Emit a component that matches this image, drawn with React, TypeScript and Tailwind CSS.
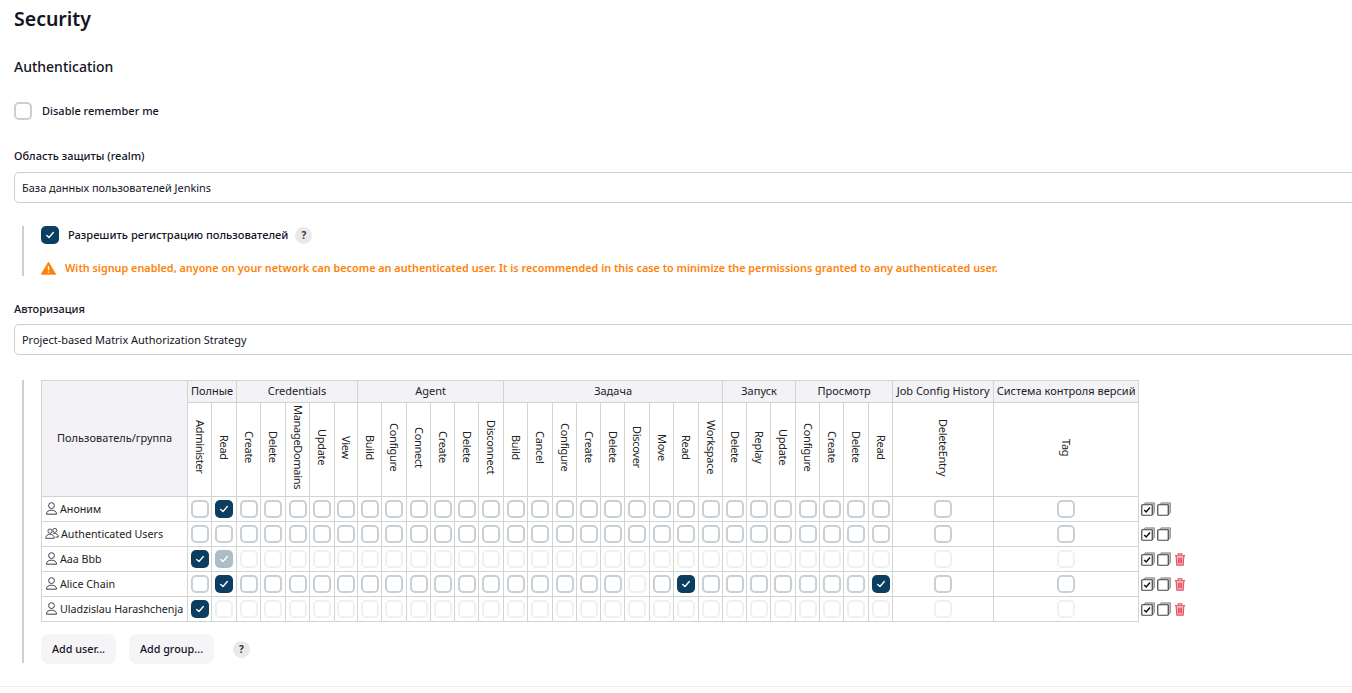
type Group = { title: string; perms: { name: string; width: number }[] };

const groups: Group[] = [
  { title: "Полные", perms: [{ name: "Administer", width: 24 }, { name: "Read", width: 25 }] },
  {
    title: "Credentials",
    perms: [
      { name: "Create", width: 24 },
      { name: "Delete", width: 25 },
      { name: "ManageDomains", width: 24 },
      { name: "Update", width: 25 },
      { name: "View", width: 23 },
    ],
  },
  {
    title: "Agent",
    perms: [
      { name: "Build", width: 24 },
      { name: "Configure", width: 25 },
      { name: "Connect", width: 24 },
      { name: "Create", width: 24 },
      { name: "Delete", width: 24 },
      { name: "Disconnect", width: 25 },
    ],
  },
  {
    title: "Задача",
    perms: [
      { name: "Build", width: 24 },
      { name: "Cancel", width: 25 },
      { name: "Configure", width: 24 },
      { name: "Create", width: 24 },
      { name: "Delete", width: 24 },
      { name: "Discover", width: 25 },
      { name: "Move", width: 24 },
      { name: "Read", width: 25 },
      { name: "Workspace", width: 24 },
    ],
  },
  {
    title: "Запуск",
    perms: [
      { name: "Delete", width: 24 },
      { name: "Replay", width: 24 },
      { name: "Update", width: 25 },
    ],
  },
  {
    title: "Просмотр",
    perms: [
      { name: "Configure", width: 24 },
      { name: "Create", width: 24 },
      { name: "Delete", width: 25 },
      { name: "Read", width: 24 },
    ],
  },
  { title: "Job Config History", perms: [{ name: "DeleteEntry", width: 101 }] },
  { title: "Система контроля версий", perms: [{ name: "Tag", width: 145 }] },
];

const perms = groups.flatMap((g) => g.perms);
const total = perms.length;

// c = checked, g = checked+disabled, d = disabled, anything else is an empty box
type Row = { name: string; group?: boolean; states: Record<number, string>; rest: string; trash?: boolean };

const rows: Row[] = [
  { name: "Аноним", states: { 1: "c" }, rest: "e" },
  { name: "Authenticated Users", group: true, states: {}, rest: "e" },
  { name: "Aaa Bbb", states: { 0: "c", 1: "g" }, rest: "d", trash: true },
  { name: "Alice Chain", states: { 1: "c", 18: "d", 20: "c", 28: "c" }, rest: "e", trash: true },
  { name: "Uladzislau Harashchenja", states: { 0: "c" }, rest: "d", trash: true },
];

const Check = ({ state }: { state: string }) => {
  const box = "w-[18px] h-[18px] rounded-[5px]";
  if (state === "c" || state === "g") {
    return (
      <span
        className={`${box} inline-flex items-center justify-center align-middle ${
          state === "c" ? "bg-[#0b3e60]" : "bg-[#adbdc8]"
        }`}
      >
        <svg viewBox="0 0 12 12" className="w-[10px] h-[10px]" fill="none" stroke="white" strokeWidth="1.6" strokeLinecap="round" strokeLinejoin="round">
          <path d="M2 6.5 4.8 9 10 3" />
        </svg>
      </span>
    );
  }
  return (
    <span
      className={`${box} inline-block align-middle border-2 bg-white ${
        state === "d" ? "border-[#eef0f2]" : "border-[#c8d0d6]"
      }`}
    />
  );
};

const HelpDot = () => (
  <span className="inline-flex w-[17px] h-[17px] rounded-full bg-[#e9e9ea] items-center justify-center text-[10px] font-bold text-[#333]">
    ?
  </span>
);

const UserIcon = () => (
  <svg viewBox="0 0 13 13" className="w-[13px] h-[13px] shrink-0" fill="none" stroke="#3c3c44" strokeWidth="1">
    <circle cx="6.5" cy="3.6" r="2.9" />
    <path d="M1.5 12.2c0-2.8 2-4 5-4s5 1.2 5 4Z" strokeLinejoin="round" />
  </svg>
);

const GroupIcon = () => (
  <svg viewBox="0 0 14 12" className="w-[14px] h-[13px] shrink-0" fill="none" stroke="#3c3c44" strokeWidth="0.9">
    <circle cx="5" cy="3.6" r="2.1" />
    <circle cx="9.8" cy="2.9" r="2" />
    <path d="M.8 10.8c0-2.6 1.6-4 4.2-4s4.2 1.4 4.2 4Z" strokeLinejoin="round" />
    <path d="M8.4 6c2.9-.5 5 .9 5 3.6h-3" strokeLinejoin="round" />
  </svg>
);

const SelectAllIcon = ({ checked }: { checked: boolean }) => (
  <svg viewBox="0 0 14 14" className="w-[14px] h-[14px] shrink-0" fill="none">
    <path d="M2 3 4 .8h9.5v9.7L11.5 13Z" stroke="#8a8a8a" strokeWidth="0.8" fill="#bdbdbd" />
    <rect x="0.75" y="2.75" width="10.5" height="10.5" rx="0.8" fill="white" stroke="#444" strokeWidth="1.2" />
    {checked && <path d="M3.2 8 5.2 10 9 5.4" stroke="#111" strokeWidth="1.5" />}
  </svg>
);

const TrashIcon = () => (
  <svg viewBox="0 0 12 14" className="w-[12px] h-[13px] shrink-0" fill="none" stroke="#e8505f" strokeWidth="1.2">
    <path d="M0.5 2.8h11" />
    <path d="M4 2.6V1h4v1.6" />
    <path d="M1.8 3 2.6 13h6.8l.8-10" fill="#f7b5be" />
    <path d="M4.5 5v6M6 5v6M7.5 5v6" />
  </svg>
);

const App = () => {
  return (
    <div className="w-[1352px] h-[693px] overflow-hidden bg-white text-[#14141f] font-['Noto_Sans','Open_Sans',sans-serif]">
      <div className="pl-[14px]">
        <h1 className="pt-[6px] text-[19.5px] leading-[26px] font-semibold">Security</h1>
        <h2 className="mt-[25px] text-[14px] leading-[20px] font-medium">Authentication</h2>

        <label className="mt-[25px] flex items-center gap-[10px] text-[11px] leading-[18px] font-medium">
          <Check state="e" />
          Disable remember me
        </label>

        <div className="mt-[28px] text-[11px] leading-[16px] font-medium">Область защиты (realm)</div>
        <div className="mt-[8px] w-[1400px] h-[31px] border border-[#c8d0d6] rounded-[5px] px-[7px] pt-[1px] flex items-center text-[10.95px]">
          База данных пользователей Jenkins
        </div>

        <div className="mt-[23px] ml-[8px] border-l-2 border-[#c8d0d6] pl-[17px] h-[50px]">
          <div className="flex items-center gap-[9px] text-[11.1px] leading-[18px] font-medium">
            <Check state="c" />
            Разрешить регистрацию пользователей
            <span className="-ml-[2px]">
              <HelpDot />
            </span>
          </div>
          <div className="mt-[16px] flex items-center gap-[9px] text-[10.83px] leading-[16px] font-semibold text-[#fe820a]">
            <svg viewBox="0 0 16 14" className="w-[15px] h-[14px]">
              <path d="M8 .8 15.6 13.6H.4Z" fill="#fe820a" stroke="#fe820a" strokeLinejoin="round" />
              <path d="M8 5v4.4M8 10.8v1.2" stroke="white" strokeWidth="1.5" />
            </svg>
            With signup enabled, anyone on your network can become an authenticated user. It is recommended in this case to minimize the permissions granted to any authenticated user.
          </div>
        </div>

        <div className="mt-[25px] text-[11px] leading-[16px] font-medium">Авторизация</div>
        <div className="mt-[7px] w-[1400px] h-[31px] border border-[#c8d0d6] rounded-[5px] px-[7px] pt-[2px] flex items-center text-[10.95px]">
          Project-based Matrix Authorization Strategy
        </div>

        <div className="mt-[25px] ml-[8px] border-l-2 border-[#c8d0d6] pl-[17px] h-[283px]">
          <table className="table-fixed border-collapse text-[11px] text-[#222] w-[1149px]">
            <colgroup>
              <col className="w-[146px]" />
              {perms.map((p, i) => (
                <col key={i} style={{ width: p.width }} />
              ))}
              <col className="w-[52px]" />
            </colgroup>
            <thead>
              <tr className="h-[22px]">
                <th rowSpan={2} className="border border-[#d3d3d0] bg-[#f2f2f7] font-normal">
                  Пользователь/группа
                </th>
                {groups.map((g) => (
                  <th key={g.title} colSpan={g.perms.length} className="border border-[#d3d3d0] bg-[#f2f2f7] font-normal whitespace-nowrap px-0">
                    {g.title}
                  </th>
                ))}
              </tr>
              <tr className="h-[94px]">
                {perms.map((p, i) => (
                  <th key={i} className="border border-[#d3d3d0] font-normal p-0">
                    <span className="inline-block [writing-mode:vertical-rl] whitespace-nowrap tracking-[-0.3px]">{p.name}</span>
                  </th>
                ))}
              </tr>
            </thead>
            <tbody>
              {rows.map((r) => (
                <tr key={r.name} className="h-[25px]">
                  <td className="border border-[#d3d3d0] pl-[3px] whitespace-nowrap text-[10.7px]">
                    <span className="flex items-center gap-[2px]">
                      {r.group ? <GroupIcon /> : <UserIcon />}
                      {r.name}
                    </span>
                  </td>
                  {Array.from({ length: total }, (_, i) => (
                    <td key={i} className="border border-[#d3d3d0] text-center p-0">
                      <Check state={r.states[i] ?? r.rest} />
                    </td>
                  ))}
                  <td className="pl-[2px]">
                    <span className="flex items-center gap-[2px]">
                      <SelectAllIcon checked />
                      <SelectAllIcon checked={false} />
                      {r.trash && (
                        <span className="ml-[1px]">
                          <TrashIcon />
                        </span>
                      )}
                    </span>
                  </td>
                </tr>
              ))}
            </tbody>
          </table>
          <div className="mt-[12px] flex items-center text-[10.8px] font-medium">
            <span className="h-[30px] w-[75px] rounded-[8px] bg-[#f5f5f8] flex items-center justify-center">Add user...</span>
            <span className="ml-[13px] h-[30px] w-[85px] rounded-[8px] bg-[#f5f5f8] flex items-center justify-center">Add group...</span>
            <span className="ml-[19px]">
              <HelpDot />
            </span>
          </div>
        </div>
      </div>
      <div className="mt-[23px] border-t border-[#eeeef2]" />
    </div>
  );
};

export default App;
